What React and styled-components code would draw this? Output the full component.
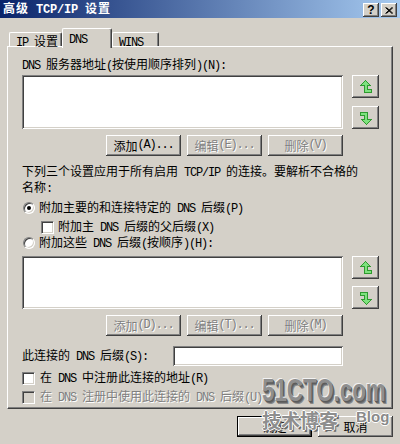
import React from 'react';
import styled, { createGlobalStyle, css } from 'styled-components';

const Global = createGlobalStyle`
  html, body { margin: 0; padding: 0; background: #D4D0C8; }
  body { width: 400px; height: 444px; overflow: hidden; }
`;

const Lat = styled.span`
  font-family: "Liberation Mono", monospace;
  letter-spacing: -1.2px;
  white-space: pre;
`;

const T = ({ children }) => {
  const parts = String(children).split(/([\x20-\x7e]+)/);
  return parts.map((p, i) =>
    /^[\x20-\x7e]+$/.test(p) ? <Lat key={i}>{p}</Lat> : p
  );
};

const Window = styled.div`
  position: relative;
  width: 400px;
  height: 444px;
  overflow: hidden;
  background: #D4D0C8;
  font-family: "Noto Sans CJK SC", "Liberation Mono", sans-serif;
  font-size: 12px;
  line-height: 13px;
  color: #000;
  display: flex;
  flex-direction: column;
`;

const TitleBar = styled.div`
  flex: none;
  height: 18px;
  display: flex;
  align-items: center;
  justify-content: space-between;
  padding: 0 3px;
  background: linear-gradient(to right, #0A246A, #A6CAF0);
`;

const TitleText = styled.div`
  color: #fff;
  font-weight: bold;
  letter-spacing: 1px;
  ${Lat} { letter-spacing: -0.2px; }
`;

const TitleButtons = styled.div`
  display: flex;
  gap: 2px;
  align-self: flex-start;
  margin-top: 3px;
`;

const bevel = css`
  background: #D4D0C8;
  box-shadow: inset -1px -1px #404040, inset 1px 1px #fff,
    inset -2px -2px #808080, inset 2px 2px #D4D0C8;
`;

const sunken = css`
  background: #fff;
  box-shadow: inset 1px 1px #808080, inset -1px -1px #fff,
    inset 2px 2px #404040, inset -2px -2px #D4D0C8;
`;

const CapButton = styled.div`
  ${bevel}
  width: 16px;
  height: 14px;
  display: flex;
  align-items: center;
  justify-content: center;
  font-family: "Liberation Sans", sans-serif;
  font-weight: bold;
  font-size: 12px;
  line-height: 12px;
  color: #000;
`;

const TabStrip = styled.div`
  flex: none;
  position: relative;
  z-index: 1;
  display: flex;
  align-items: flex-end;
  height: 18px;
  margin-top: 10px;
  padding-left: 9px;
`;

const Tab = styled.div`
  box-sizing: border-box;
  width: ${p => p.$w}px;
  height: ${p => (p.$active ? 20 : 14)}px;
  margin-bottom: ${p => (p.$active ? -2 : 0)}px;
  padding: ${p => (p.$active ? 2 : 1)}px 0 0 6px;
  background: #D4D0C8;
  border-top: 1px solid #fff;
  border-left: 1px solid #fff;
  border-right: 1px solid #404040;
  border-radius: 2px 2px 0 0;
  box-shadow: inset -1px 0 #808080;
  white-space: nowrap;
`;

const Panel = styled.div`
  flex: none;
  box-sizing: border-box;
  height: 363px;
  margin: 0 7px;
  padding: 10px 12px 0 14px;
  border-top: 1px solid #fff;
  border-left: 1px solid #fff;
  border-right: 1px solid #404040;
  border-bottom: 1px solid #404040;
  box-shadow: inset -1px -1px #808080;
  display: flex;
  flex-direction: column;
`;

const Label = styled.div`
  height: 13px;
  white-space: nowrap;
  margin-top: ${p => p.$mt || 0}px;
`;

const ListRow = styled.div`
  display: flex;
  gap: 9px;
  margin-top: ${p => p.$mt}px;
  height: ${p => p.$h}px;
`;

const ListBox = styled.div`
  ${sunken}
  width: 321px;
  height: 100%;
`;

const SideButtons = styled.div`
  display: flex;
  flex-direction: column;
  justify-content: space-between;
`;

const SideBtn = styled.div`
  ${bevel}
  width: 27px;
  height: 23px;
  display: flex;
  align-items: center;
  justify-content: center;
`;

const ButtonRow = styled.div`
  width: 321px;
  display: flex;
  justify-content: flex-end;
  gap: 6px;
  margin-top: ${p => p.$mt}px;
`;

const Btn = styled.div`
  ${bevel}
  box-sizing: border-box;
  width: 75px;
  height: 21px;
  display: flex;
  align-items: center;
  justify-content: center;
  white-space: nowrap;
  color: #000;
  ${p => p.$disabled && css`
    color: #808080;
    text-shadow: 1px 1px #fff;
  `}
  ${p => p.$default && css`
    border: 1px solid #000;
  `}
`;

const Desc = styled.div`
  margin-top: 8px;
  white-space: nowrap;
`;

const OptionRow = styled.div`
  display: flex;
  align-items: center;
  height: 16px;
  gap: ${p => p.$gap || 5}px;
  margin-top: ${p => p.$mt || 0}px;
  padding-left: ${p => p.$indent || 0}px;
  white-space: nowrap;
  ${p => p.$disabled && css`
    color: #808080;
    text-shadow: 1px 1px #fff;
  `}
`;

const Radio = styled.span`
  position: relative;
  flex: none;
  box-sizing: border-box;
  width: 12px;
  height: 12px;
  border-radius: 50%;
  background: #fff;
  border: 1px solid;
  border-color: #808080 #fff #fff #808080;
  box-shadow: inset 1px 1px #404040, inset -1px -1px #D4D0C8;
  &::after {
    content: '';
    display: ${p => (p.$checked ? 'block' : 'none')};
    position: absolute;
    left: 3px;
    top: 3px;
    width: 4px;
    height: 4px;
    border-radius: 50%;
    background: #000;
  }
`;

const Check = styled.span`
  flex: none;
  box-sizing: border-box;
  width: 13px;
  height: 13px;
  background: ${p => (p.$disabled ? '#D4D0C8' : '#fff')};
  border: 1px solid;
  border-color: #808080 #fff #fff #808080;
  box-shadow: inset 1px 1px #404040, inset -1px -1px #D4D0C8;
`;

const SuffixRow = styled.div`
  width: 321px;
  height: 20px;
  margin-top: 10px;
  display: flex;
  align-items: center;
  justify-content: space-between;
  white-space: nowrap;
`;

const TextInput = styled.div`
  ${sunken}
  width: 170px;
  height: 20px;
`;

const Footer = styled.div`
  flex: none;
  display: flex;
  justify-content: flex-end;
  gap: 6px;
  margin-top: 7px;
  padding-right: 7px;
`;

const Watermark = styled.div`
  position: absolute;
  left: 262px;
  top: 376px;
  z-index: 5;
  pointer-events: none;
`;

const WmLogo = styled.div`
  font-family: "Liberation Sans", Arial, sans-serif;
  font-weight: bold;
  font-size: 31px;
  line-height: 30px;
  color: #8f8f8f;
  transform: scaleX(0.72);
  transform-origin: left top;
  white-space: nowrap;
  text-shadow: -1px -1px 0 #f2f2f2, 1px 1px 0 #5a5a5a, 2px 2px 0 #666, 3px 3px 0 #8a8a8a;
`;

const WmSub = styled.div`
  display: flex;
  align-items: flex-start;
  margin-top: 3px;
`;

const WmCn = styled.div`
  font-family: "Noto Sans CJK SC", sans-serif;
  font-weight: bold;
  font-size: 19px;
  line-height: 22px;
  color: #8e8e8e;
  white-space: nowrap;
  text-shadow: 1px 0 #fff, -1px 0 #fff, 0 1px #fff, 0 -1px #fff, 2px 2px #6a6a6a;
`;

const WmBlog = styled.div`
  margin-left: 18px;
  margin-top: 0;
  font-family: "Liberation Sans", Arial, sans-serif;
  font-weight: bold;
  font-size: 15px;
  line-height: 15px;
  color: #8a8a8a;
  text-shadow: 1px 0 #fff, -1px 0 #fff, 0 1px #fff, 0 -1px #fff;
`;

const ArrowIcon = ({ down }) => (
  <svg width="12" height="14" viewBox="0 0 12 14" style={down ? { transform: 'rotate(180deg)' } : undefined}>
    <polygon
      points="5.5,0.5 10.5,5.5 7.5,5.5 7.5,9.5 11.5,9.5 11.5,12.5 4.5,12.5 4.5,5.5 0.5,5.5"
      fill="#7EE27E"
      stroke="#2E9A2E"
      strokeWidth="1"
      shapeRendering="crispEdges"
    />
  </svg>
);

const CloseIcon = () => (
  <svg width="8" height="7" viewBox="0 0 8 7">
    <path d="M0.5 0.5 L7 6.5 M1.5 0.5 L8 6.5 M7 0.5 L0.5 6.5 M8 0.5 L1.5 6.5" stroke="#000" strokeWidth="1" />
  </svg>
);

const ListGroup = ({ mt, h }) => (
  <ListRow $mt={mt} $h={h}>
    <ListBox />
    <SideButtons>
      <SideBtn><ArrowIcon /></SideBtn>
      <SideBtn><ArrowIcon down /></SideBtn>
    </SideButtons>
  </ListRow>
);

export default function App() {
  return (
    <>
      <Global />
      <Window>
        <TitleBar>
          <TitleText><T>高级 TCP/IP 设置</T></TitleText>
          <TitleButtons>
            <CapButton>?</CapButton>
            <CapButton><CloseIcon /></CapButton>
          </TitleButtons>
        </TitleBar>

        <TabStrip>
          <Tab $w={53}><T>IP 设置</T></Tab>
          <Tab $w={50} $active><T>DNS</T></Tab>
          <Tab $w={47}><T>WINS</T></Tab>
        </TabStrip>

        <Panel>
          <Label><T>DNS 服务器地址(按使用顺序排列)(N):</T></Label>
          <ListGroup mt={5} h={54} />
          <ButtonRow $mt={6}>
            <Btn><T>添加(A)...</T></Btn>
            <Btn $disabled><T>编辑(E)...</T></Btn>
            <Btn $disabled><T>删除(V)</T></Btn>
          </ButtonRow>

          <Desc>
            <T>下列三个设置应用于所有启用 TCP/IP 的连接。要解析不合格的</T>
            <br />
            <T>名称:</T>
          </Desc>

          <OptionRow $mt={4} $gap={4} $indent={1}>
            <Radio $checked />
            <span><T>附加主要的和连接特定的 DNS 后缀(P)</T></span>
          </OptionRow>
          <OptionRow $mt={3} $gap={4} $indent={19}>
            <Check />
            <span><T>附加主 DNS 后缀的父后缀(X)</T></span>
          </OptionRow>
          <OptionRow $gap={4} $indent={1}>
            <Radio />
            <span><T>附加这些 DNS 后缀(按顺序)(H):</T></span>
          </OptionRow>

          <ListGroup mt={5} h={53} />
          <ButtonRow $mt={6}>
            <Btn $disabled><T>添加(D)...</T></Btn>
            <Btn $disabled><T>编辑(T)...</T></Btn>
            <Btn $disabled><T>删除(M)</T></Btn>
          </ButtonRow>

          <SuffixRow>
            <span><T>此连接的 DNS 后缀(S):</T></span>
            <TextInput />
          </SuffixRow>

          <OptionRow $mt={4}>
            <Check />
            <span><T>在 DNS 中注册此连接的地址(R)</T></span>
          </OptionRow>
          <OptionRow $mt={3} $disabled>
            <Check $disabled />
            <span><T>在 DNS 注册中使用此连接的 DNS 后缀(U)</T></span>
          </OptionRow>
        </Panel>

        <Footer>
          <Btn $default>确定</Btn>
          <Btn>取消</Btn>
        </Footer>

        <Watermark>
          <WmLogo>51CTO.com</WmLogo>
          <WmSub>
            <WmCn>技术博客</WmCn>
            <WmBlog>Blog</WmBlog>
          </WmSub>
        </Watermark>
      </Window>
    </>
  );
}
